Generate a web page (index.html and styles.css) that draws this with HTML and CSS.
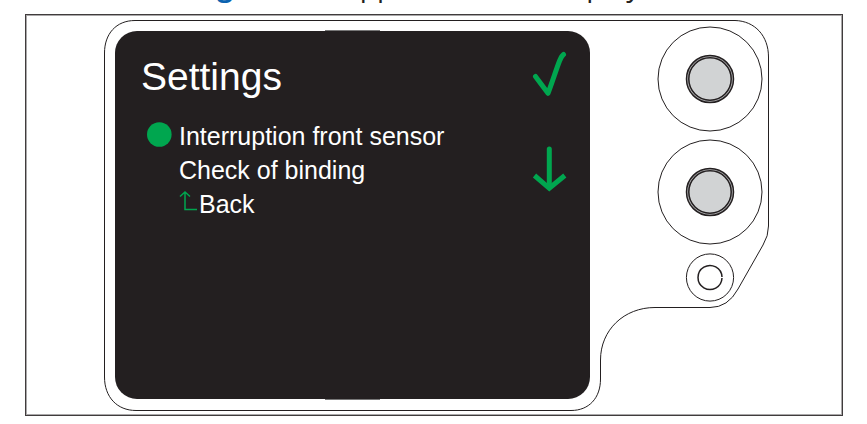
FILE: index.html
```html
<!DOCTYPE html>
<html lang="en">
<head>
<meta charset="utf-8">
<title>Settings</title>
<link rel="stylesheet" href="styles.css">
</head>
<body>
<p class="caption"><strong>Settings</strong> menu appears on the display</p>
<main class="figure">
  <div class="device">
    <svg class="outline" viewBox="104 20 665 391" aria-hidden="true">
      <path class="thin" d="M135 20.5H735C755 21 768.5 36 768.5 57V226Q768.5 236 763 245L738 289Q728 307.5 710 307.5H655C624 307.5 600.5 330 600.5 360V379C600.5 398 589 410.500 571 410.500H136C117 410.500 104.500 397 104.500 377V53C104.500 34 116 20.500 135 20.500Z"/>
      <path class="edge" d="M325 30.500H380M325 399.500H380"/>
    </svg>
    <section class="screen">
      <div class="content">
        <h1>Settings</h1>
        <ul class="menu">
          <li><svg class="dot" viewBox="0 0 34 34" aria-hidden="true"><circle cx="14.300" cy="15.500" r="12.300"/></svg>Interruption front sensor</li>
          <li>Check of binding</li>
          <li><svg class="back" viewBox="0 0 20 34" aria-hidden="true"><path d="M6 5V22.500H18M1 9.500L6 5L11 9.500"/></svg>Back</li>
        </ul>
      </div>
      <div class="keys">
        <svg viewBox="532 51 36 48" aria-hidden="true"><path class="round" d="M535.500 76.500L548 93.300C552 83 556 70 559.500 61Q561.500 56 563.500 54.500"/></svg>
        <svg viewBox="532 147 36 48" aria-hidden="true"><path class="round" d="M549.300 149V186"/><path d="M534.500 175.500L549.300 188.300L564.800 175.500"/></svg>
      </div>
    </section>
    <div class="buttons">
      <button class="key" aria-label="Confirm"><svg viewBox="0 0 105 105" aria-hidden="true"><circle class="thin" cx="53" cy="53" r="52"/><circle class="rim" cx="53" cy="53" r="23.500"/><circle class="cap" cx="53" cy="53" r="21.200"/></svg></button>
      <button class="key" aria-label="Down"><svg viewBox="0 0 105 105" aria-hidden="true"><circle class="thin" cx="53" cy="53" r="52"/><circle class="rim" cx="53" cy="53" r="23.500"/><circle class="cap" cx="53" cy="53" r="21.200"/></svg></button>
      <button class="key small" aria-label="Reset"><svg viewBox="0 0 50 50" aria-hidden="true"><circle class="thin" cx="25" cy="25.500" r="23.600"/><path class="ring" d="M37 26A12 12 0 1 1 37 25"/></svg></button>
    </div>
  </div>
</main>
</body>
</html>
```

FILE: styles.css
```css
* { box-sizing: border-box; }
body {
  margin: 0;
  background: #fff;
  color: #231f20;
  font-family: "Liberation Sans", Arial, sans-serif;
  overflow: hidden;
}
svg { display: block; fill: none; overflow: visible; }
.caption {
  display: flex;
  align-items: flex-end;
  gap: 14px;
  height: 14px;
  margin: 0;
  padding: 0 0 13px 134px;
  font: 28px/32px "Open Sans", sans-serif;
  white-space: nowrap;
}
.caption strong { color: #0b63b0; }
.figure {
  margin: 0 24px 0 25px;
  padding: 5px 73px 5px 78px;
  border: 1px solid #403c3d;
  box-shadow: inset 0 0 0 1px #aaa8a9;
}
.device {
  position: relative;
  display: flex;
  justify-content: space-between;
  max-width: 665px;
  padding: 11px 7px 11px 11px;
}
.outline { position: absolute; top: 0; left: 0; width: 100%; }
.thin { stroke: #231f20; stroke-width: 1; }
.edge { stroke: #777; stroke-width: 1; }
.screen {
  position: relative;
  display: flex;
  justify-content: space-between;
  width: 475px;
  padding: 20px 22px 178px 26px;
  border-radius: 22px;
  background: #231f20;
  color: #fff;
}
h1 {
  margin: 0 0 16px;
  font-size: 39px;
  font-weight: 400;
  line-height: 52px;
}
.menu {
  margin: 0 0 0 4px;
  padding: 0;
  list-style: none;
  font-size: 25px;
  line-height: 34px;
}
.menu li { display: flex; padding-left: 34px; }
.dot { width: 34px; height: 34px; margin-left: -34px; fill: #00a64f; }
.back { width: 20px; height: 34px; stroke: #00a64f; stroke-width: 1.5; }
.keys { display: flex; flex-direction: column; gap: 48px; }
.keys svg { width: 36px; height: 48px; stroke: #00a64f; stroke-width: 5; }
.round { stroke-linecap: round; stroke-linejoin: round; }
.buttons {
  position: relative;
  display: flex;
  flex-direction: column;
  align-items: center;
  gap: 8px;
  margin-top: -5px;
}
.key {
  width: 105px;
  height: 105px;
  padding: 0;
  border: 0;
  border-radius: 50%;
  background: none;
  cursor: pointer;
}
.small { width: 50px; height: 50px; }
.rim { fill: #b5b5b7; stroke: #231f20; stroke-width: 1.5; }
.cap { fill: #d1d3d4; stroke: #231f20; stroke-width: 1.5; }
.ring { stroke: #231f20; stroke-width: 1.5; }
```
